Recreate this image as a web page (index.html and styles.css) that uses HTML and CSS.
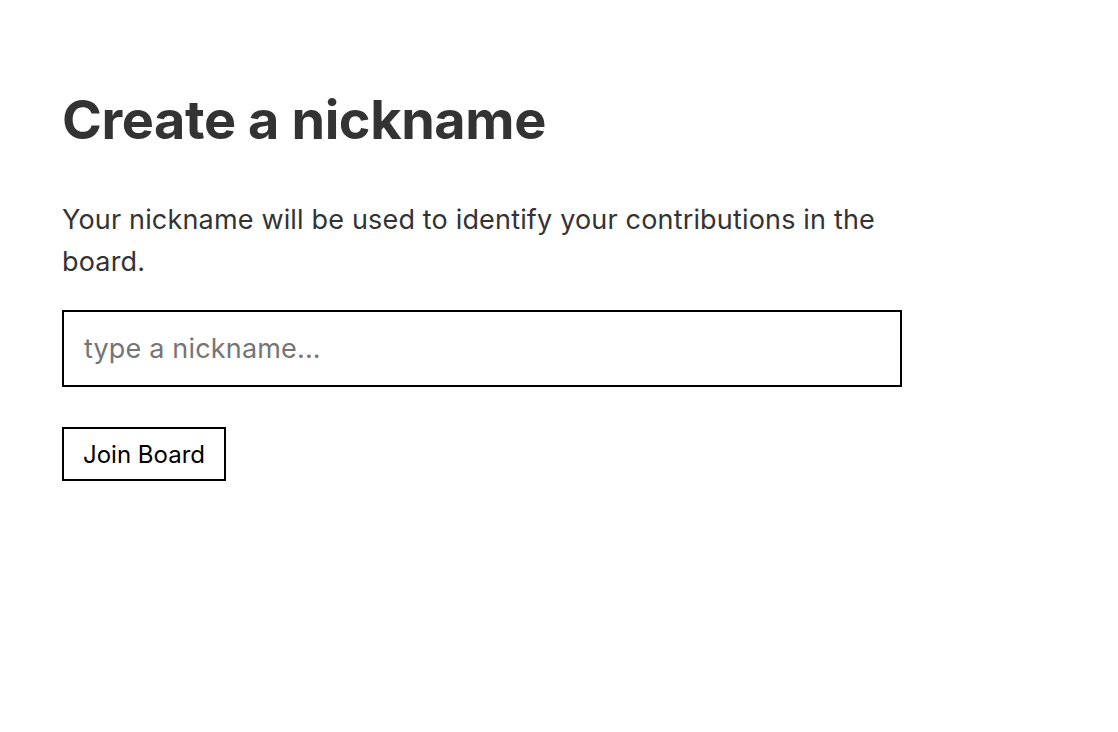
FILE: index.html
```html
<!DOCTYPE html>
<html lang="en">
<head>
<meta charset="utf-8">
<title>Create a nickname</title>
<link rel="stylesheet" href="styles.css">
</head>
<body>
<main class="page">
  <h1 class="title">Create a nickname</h1>
  <p class="lead">Your nickname will be used to identify your contributions in the board.</p>
  <form class="form">
    <input class="nick-input" type="text" placeholder="type a nickname...">
    <button class="join-btn" type="button">Join Board</button>
  </form>
</main>
</body>
</html>
```
FILE: styles.css
```css
html, body {
  margin: 0;
  padding: 0;
  background: #ffffff;
}
body {
  font-family: Inter, "Noto Sans", sans-serif;
  color: #333333;
}
.page {
  width: 840px;
  padding: 84px 0 0 62px;
}
.title {
  margin: 0;
  font-size: 54px;
  font-weight: 700;
  line-height: 72px;
  letter-spacing: -0.4px;
  color: #333333;
}
.lead {
  margin: 43px 0 0;
  font-size: 27px;
  line-height: 42px;
  letter-spacing: 0.17px;
  color: #333333;
}
.form {
  display: flex;
  flex-direction: column;
  align-items: flex-start;
  margin-top: 27px;
}
.nick-input {
  box-sizing: border-box;
  width: 840px;
  height: 77px;
  border: 2px solid #000000;
  border-radius: 0;
  padding: 0 20px;
  font-family: Inter, "Noto Sans", sans-serif;
  font-size: 27px;
  letter-spacing: 0.17px;
  color: #333333;
  outline: none;
}
.nick-input::placeholder {
  color: #757575;
}
.join-btn {
  box-sizing: border-box;
  margin-top: 40px;
  height: 54px;
  padding: 0 19px;
  border: 2px solid #000000;
  border-radius: 0;
  background: #ffffff;
  font-family: Inter, "Noto Sans", sans-serif;
  font-size: 24px;
  color: #000000;
}
```
